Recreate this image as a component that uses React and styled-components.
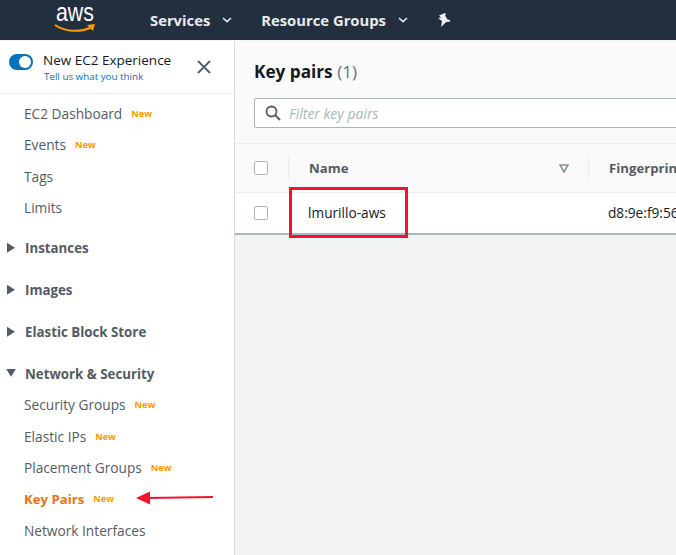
import styled, { createGlobalStyle } from "styled-components";

const GlobalStyle = createGlobalStyle`
  html, body {
    margin: 0;
    height: 100%;
    overflow: hidden;
    background: #f2f3f3;
    font-family: "Open Sans", "Noto Sans", sans-serif;
  }
`;

const links1 = [
  { label: "EC2 Dashboard", isNew: true },
  { label: "Events", isNew: true },
  { label: "Tags" },
  { label: "Limits" },
];
const sections = ["Instances", "Images", "Elastic Block Store"];
const links2 = [
  { label: "Security Groups", isNew: true },
  { label: "Elastic IPs", isNew: true },
  { label: "Placement Groups", isNew: true },
  { label: "Key Pairs", isNew: true, active: true },
  { label: "Network Interfaces" },
];

const Chevron = () => (
  <svg width="10" height="6" viewBox="0 0 10 6">
    <path d="M1 1l4 3.6L9 1" fill="none" stroke="#e6e8ea" strokeWidth="1.6" />
  </svg>
);

const NavLink = ({ label, isNew, active }) => (
  <LinkRow $active={active}>
    {label}
    {isNew && <NewTag>New</NewTag>}
  </LinkRow>
);

const App = () => {
  return (
    <Page>
      <GlobalStyle />
      <TopBar>
        <Logo>
          <LogoText>aws</LogoText>
          <svg width="42" height="10" viewBox="0 0 42 10">
            <path d="M1 1C10 7.500 26 9 38 3" fill="none" stroke="#f90" strokeWidth="2" />
            <path d="M33 1L41 0L39 7z" fill="#f90" />
          </svg>
        </Logo>
        <Menu>Services<Chevron /></Menu>
        <Menu>Resource Groups<Chevron /></Menu>
        <svg width="14" height="15" viewBox="0 0 14 15">
          <path d="M2 2.500L8 0l1 1.500-1 1 2.500 4 2.500.5.300 1.500-4 .5L4 14l1-6-3.500-2.500L3 4.500l1.500.5z" fill="#eef0f1" />
        </svg>
      </TopBar>
      <Body>
        <Sidebar>
          <Experience>
            <Toggle />
            <ExperienceText>
              <ExperienceTitle>New EC2 Experience</ExperienceTitle>
              <ExperienceLink>Tell us what you think</ExperienceLink>
            </ExperienceText>
            <svg width="14" height="14" viewBox="0 0 14 14">
              <path d="M1 1l12 12M13 1L1 13" stroke="#545b64" strokeWidth="1.8" />
            </svg>
          </Experience>
          <NavList>
            {links1.map((l) => <NavLink key={l.label} {...l} />)}
            {sections.map((s, i) => (
              <SectionRow key={s} $first={i === 0}><Caret />{s}</SectionRow>
            ))}
            <SectionRow><Caret $open />Network &amp; Security</SectionRow>
            {links2.map((l) => <NavLink key={l.label} {...l} />)}
          </NavList>
          <RedArrow width="82" height="16" viewBox="0 0 82 16">
            <path d="M12 8L78 7" stroke="#f0142f" strokeWidth="2.200" />
            <path d="M1 8L15 1.500V14.500z" fill="#f0142f" />
          </RedArrow>
        </Sidebar>
        <Main>
          <Head>
            <Title>Key pairs <Count>(1)</Count></Title>
            <Filter>
              <svg width="16" height="16" viewBox="0 0 16 16">
                <circle cx="6.500" cy="6.500" r="5" fill="none" stroke="#545b64" strokeWidth="1.800" />
                <path d="M10 10l5 5" stroke="#545b64" strokeWidth="2" />
              </svg>
              <FilterText>Filter key pairs</FilterText>
            </Filter>
          </Head>
          <TableHead>
            <CheckCell><Check /></CheckCell>
            <HeadCell $divider>
              Name
              <svg width="10" height="9" viewBox="0 0 10 9">
                <path d="M1 1h8L5 8z" fill="none" stroke="#879596" strokeWidth="1.600" />
              </svg>
            </HeadCell>
            <HeadCell $divider>Fingerprint</HeadCell>
          </TableHead>
          <TableRow>
            <CheckCell><Check /></CheckCell>
            <BodyCell>lmurillo-aws</BodyCell>
            <BodyCell>d8:9e:f9:56:1c:04</BodyCell>
          </TableRow>
          <RedBox />
        </Main>
      </Body>
    </Page>
  );
};

export default App;

const Page = styled.div`
  width: 676px;
  height: 555px;
  overflow: hidden;
  display: flex;
  flex-direction: column;
`;

const TopBar = styled.header`
  height: 40px;
  flex: none;
  background: #232f3e;
  display: flex;
  align-items: center;
  padding-left: 54px;
  box-sizing: border-box;
`;

const Logo = styled.div`
  width: 96px;
  display: flex;
  flex-direction: column;
  align-items: flex-start;
  height: 40px;
  padding-top: 1px;
  box-sizing: border-box;
`;

const LogoText = styled.span`
  font-family: "Liberation Sans", sans-serif;
  font-size: 26px;
  line-height: 23px;
  height: 23px;
  color: #fff;
  margin-left: 2px;
  transform: scaleX(0.82);
  transform-origin: left center;
`;

const Menu = styled.div`
  display: flex;
  align-items: center;
  gap: 12px;
  margin-right: 29px;
  color: #e9ebed;
  font-size: 14.8px;
  font-weight: 700;
`;

const Body = styled.div`
  flex: 1;
  display: flex;
  min-height: 0;
  padding-top: 1px;
`;

const Sidebar = styled.aside`
  position: relative;
  width: 234px;
  flex: none;
  background: #fff;
  border-right: 1px solid #d5dbdb;
`;

const Experience = styled.div`
  height: 53px;
  box-sizing: border-box;
  border-bottom: 1px solid #eaeded;
  display: flex;
  align-items: center;
  padding: 0 23px 0 9px;
`;

const Toggle = styled.span`
  position: relative;
  width: 24px;
  height: 16px;
  border-radius: 8px;
  background: #0073bb;
  margin: -11px 10px 0 0;
  flex: none;

  &::after {
    content: "";
    position: absolute;
    right: 2px;
    top: 2px;
    width: 12px;
    height: 12px;
    border-radius: 50%;
    background: #fff;
  }
`;

const ExperienceText = styled.div`
  flex: 1;
`;

const ExperienceTitle = styled.div`
  font-size: 13.5px;
  line-height: 20px;
  color: #16191f;
`;

const ExperienceLink = styled.div`
  margin-left: 1px;
  font-size: 9.8px;
  line-height: 14px;
  color: #0073bb;
`;

const NavList = styled.nav`
  padding-top: 4px;
`;

const LinkRow = styled.div`
  height: 31.3px;
  display: flex;
  align-items: center;
  padding-left: 24px;
  font-size: ${(p) => (p.$active ? "13.2px" : "13.7px")};
  color: ${(p) => (p.$active ? "#ec7211" : "#545b64")};
  font-weight: ${(p) => (p.$active ? 700 : 400)};
`;

const NewTag = styled.span`
  margin-left: 9px;
  font-size: 9.2px;
  font-weight: 700;
  color: #ff9900;
`;

const SectionRow = styled.div`
  height: 31px;
  margin-top: ${(p) => (p.$first ? "9px" : "11px")};
  display: flex;
  align-items: center;
  font-size: 13.3px;
  font-weight: 700;
  color: #545b64;
`;

const Caret = styled.span`
  width: 25px;
  flex: none;
  height: 10px;
  box-sizing: border-box;
  padding-left: 7px;

  &::before {
    content: "";
    display: block;
    width: ${(p) => (p.$open ? "10px" : "8px")};
    height: ${(p) => (p.$open ? "8px" : "10px")};
    margin-left: ${(p) => (p.$open ? "-1px" : "0")};
    background: #545b64;
    clip-path: ${(p) =>
      p.$open ? "polygon(0 0, 100% 0, 50% 100%)" : "polygon(0 0, 100% 50%, 0 100%)"};
  }
`;

const RedArrow = styled.svg`
  position: absolute;
  left: 135px;
  top: 449px;
`;

const Main = styled.main`
  position: relative;
  flex: 1;
  min-width: 0;
  overflow: hidden;
  background: #f2f3f3;
`;

const Head = styled.div`
  height: 103px;
  box-sizing: border-box;
  background: #fafafa;
  border-bottom: 1px solid #eaeded;
  padding: 19px 0 0 19px;
`;

const Title = styled.h1`
  margin: 0;
  font-size: 17.2px;
  line-height: 24px;
  font-weight: 700;
  color: #16191f;
`;

const Count = styled.span`
  font-weight: 400;
  color: #687078;
`;

const Filter = styled.div`
  width: 480px;
  height: 30px;
  margin-top: 14px;
  box-sizing: border-box;
  background: #fff;
  border: 1px solid #aab7b8;
  border-radius: 2px;
  display: flex;
  align-items: center;
  gap: 8px;
  padding-left: 10px;
`;

const FilterText = styled.span`
  font-size: 14px;
  font-style: italic;
  color: #aab7b8;
`;

const TableHead = styled.div`
  height: 49px;
  box-sizing: border-box;
  background: #fafafa;
  border-bottom: 1px solid #eaeded;
  display: grid;
  grid-template-columns: 53px 300px 300px;
  align-items: center;
`;

const TableRow = styled.div`
  height: 42px;
  box-sizing: border-box;
  background: #fff;
  border-bottom: 2px solid #aab7b8;
  padding-bottom: 1px;
  display: grid;
  grid-template-columns: 53px 300px 300px;
  align-items: center;
`;

const CheckCell = styled.div`
  padding-left: 19px;
`;

const Check = styled.span`
  display: block;
  width: 14px;
  height: 14px;
  box-sizing: border-box;
  background: #fff;
  border: 1px solid #aab7b8;
  border-radius: 2px;
`;

const HeadCell = styled.div`
  height: 24px;
  display: flex;
  align-items: center;
  justify-content: space-between;
  padding: 0 19px 0 20px;
  border-left: ${(p) => (p.$divider ? "1px solid #eaeded" : "none")};
  font-size: 13.2px;
  font-weight: 700;
  color: #545b64;
  white-space: nowrap;
`;

const BodyCell = styled.div`
  padding-left: 20px;
  font-size: 13.7px;
  color: #16191f;
  white-space: nowrap;
`;

const RedBox = styled.div`
  position: absolute;
  left: 54px;
  top: 146px;
  width: 119px;
  height: 51px;
  box-sizing: border-box;
  border: 3px solid #f0142f;
`;
